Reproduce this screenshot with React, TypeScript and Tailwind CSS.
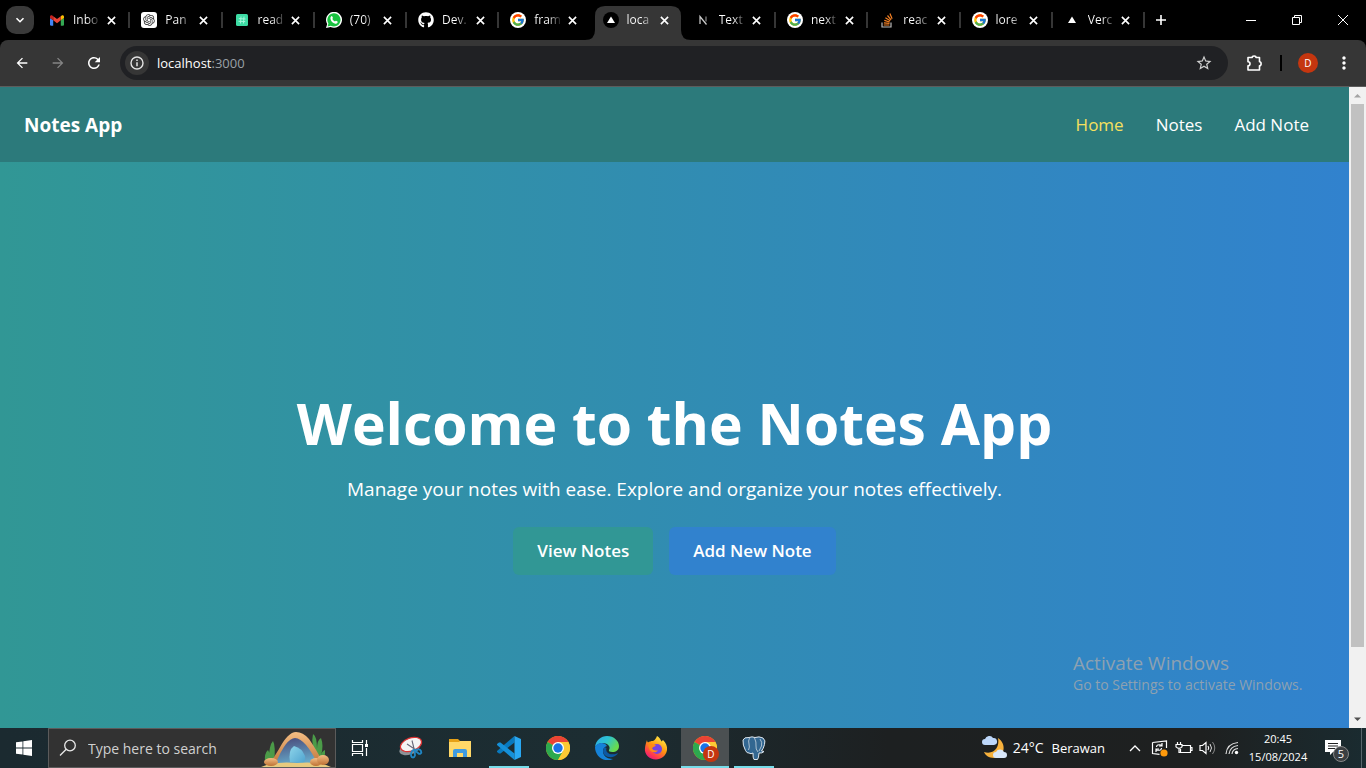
import React from "react";
import { FaGithub } from "react-icons/fa";
import { FcGoogle } from "react-icons/fc";
import { RiOpenaiFill } from "react-icons/ri";
import { MdArrowBack, MdArrowForward, MdRefresh, MdStarBorder, MdMoreVert } from "react-icons/md";

const Gmail = () => (
  <svg viewBox="0 0 24 18" className="h-[11px] w-3.5">
    <path fill="#4285f4" d="M0 2.5V16.4C0 17.3.7 18 1.6 18H5.5V8.7L0 4.5z" />
    <path fill="#34a853" d="M18.5 18h3.9c.9 0 1.6-.7 1.6-1.6V4.5l-5.5 4.2z" />
    <path fill="#fbbc04" d="M18.5 1.7v7L24 4.5V2.4C24 .4 21.700-.8 20.100.5z" />
    <path fill="#ea4335" d="M5.500 8.700v-7L12 6.600l6.500-4.900v7L12 13.600z" />
    <path fill="#c5221f" d="M0 2.400v2.100l5.500 4.200v-7L3.900.5C2.300-.8 0 .4 0 2.400z" />
  </svg>
);

const OpenAi = () => (
  <span className="flex size-4 items-center justify-center rounded-[3px] bg-white">
    <RiOpenaiFill className="size-3.5 text-[#333]" />
  </span>
);

const GreenHash = () => (
  <svg viewBox="0 0 16 16" className="size-4">
    <rect x="2" y="2" width="12" height="12" rx="1.500" fill="#3ddca4" />
    <path d="M7 4.500 6.500 11.500M10 4.500 9.500 11.500M4.800 6.600l6.700.4M4.500 9.300l6.700.3" stroke="#a5f7dc" strokeWidth="1" fill="none" />
  </svg>
);

const WhatsApp = () => (
  <svg viewBox="0 0 16 16" className="size-4">
    <path d="M0 16l1.200-4A8 8 0 1 1 4.500 15z" fill="#fff" />
    <path d="M1.600 14.500l.8-3A6.600 6.600 0 1 1 4.800 13.700z" fill="#18c23f" />
    <path d="M5.300 4.200q.7-.4 1 .2l.6 1.400q.1.400-.6 1.200 1 1.800 2.700 2.500.6-.9 1-.8l1.500.8q.4.300 0 1.200-.7 1.200-2.200 1Q5.200 10.700 4.400 6.500q-.1-1.500.9-2.300z" fill="#fff" />
  </svg>
);

const Google = () => (
  <span className="flex size-4 items-center justify-center rounded-full bg-white">
    <FcGoogle className="size-3.5" />
  </span>
);

const Vercel = () => (
  <svg viewBox="0 0 16 16" className="size-4">
    <circle cx="8" cy="8" r="8" fill="#000" />
    <path d="M8 4.500 12 11H4z" fill="#fff" />
  </svg>
);

const NextN = () => (
  <svg viewBox="0 0 16 16" className="size-4">
    <path d="M5 12V4.500L11.500 12.500" stroke="#cfcfcf" strokeWidth="1.200" fill="none" />
    <path d="M11 4.500v5" stroke="#8a8a8a" strokeWidth="1.200" />
  </svg>
);

const StackOverflow = () => (
  <svg viewBox="0 0 16 16" className="size-4">
    <path d="M3 10.500V15h9v-4.500" stroke="#bcbbbb" strokeWidth="1.200" fill="none" />
    <path d="M4.800 13h5.600M4.900 10.800l5.600.6M5.300 8.400l5.400 1.600M6.400 5.800l4.800 3M8.500 3.500l3.600 4.300M10.900 1.500l2.200 5.200" stroke="#f48024" strokeWidth="1.200" fill="none" />
  </svg>
);

const tabs = [
  { title: "Inbo", icon: <Gmail /> },
  { title: "Pan", icon: <OpenAi /> },
  { title: "read", icon: <GreenHash /> },
  { title: "(70)", icon: <WhatsApp /> },
  { title: "Dev.", icon: <FaGithub className="size-4 text-white" /> },
  { title: "fram", icon: <Google /> },
  { title: "loca", icon: <Vercel />, active: true },
  { title: "Text", icon: <NextN /> },
  { title: "next", icon: <Google /> },
  { title: "reac", icon: <StackOverflow /> },
  { title: "lore", icon: <Google /> },
  { title: "Verc", icon: <Vercel /> },
];

function TabStrip() {
  return (
    <div className="flex h-10 shrink-0 items-stretch bg-black text-white">
      <button aria-label="Search tabs" className="mt-1.5 ml-1.5 flex size-7 shrink-0 items-center justify-center rounded-[10px] bg-[#3a3a3a]">
        <svg viewBox="0 0 10 10" className="size-2.5">
          <path d="M1.500 3.200 5 6.700 8.500 3.200" stroke="#fff" strokeWidth="1.600" fill="none" />
        </svg>
      </button>
      <div className="ml-1 flex max-w-[1107px] min-w-0 flex-1">
        {tabs.map((tab, i) => (
          <div key={i} className="relative flex min-w-0 flex-1 pt-1.5">
            {tab.active && (
              <svg viewBox="0 0 106 34" preserveAspectRatio="none" className="absolute -left-[7px] bottom-0 h-[34px] w-[106px]">
                <path d="M0 34Q10 34 10 24V10Q10 0 20 0H86Q96 0 96 10V24Q96 34 106 34z" fill="#363636" />
              </svg>
            )}
            <div className="relative flex h-7 min-w-0 flex-1 items-center pl-[11px]">
              <span className="flex size-4 shrink-0 items-center justify-center">{tab.icon}</span>
              <span className="ml-2 w-7 shrink-0 bg-[linear-gradient(90deg,#fff_50%,#fff3_90%)] bg-clip-text text-xs leading-4 whitespace-nowrap text-transparent">
                {tab.title}
              </span>
              <button aria-label={"Close " + tab.title} className="ml-0.5 flex size-4 items-center justify-center">
                <svg viewBox="0 0 10 10" className="size-[9px]">
                  <path d="M1 1l8 8M9 1l-8 8" stroke="currentColor" strokeWidth="1.800" fill="none" />
                </svg>
              </button>
            </div>
            {!tab.active && i !== 5 && <span className="absolute top-3 right-0 h-4 w-0.5 bg-[#363636]" />}
          </div>
        ))}
      </div>
      <button aria-label="New tab" className="mt-1.5 ml-0.5 flex size-7 items-center justify-center">
        <svg viewBox="0 0 12 12" className="size-3">
          <path d="M6 1v10M1 6h10" stroke="#fff" strokeWidth="1.600" />
        </svg>
      </button>
      <div className="ml-auto flex">
        <button aria-label="Minimize" className="flex w-[46px] items-center justify-center">
          <span className="h-px w-2.5 bg-white" />
        </button>
        <button aria-label="Restore" className="flex w-[46px] items-center justify-center">
          <svg viewBox="0 0 10 10" className="size-2.5">
            <path d="M.5 2.500h7v7h-7zM2.500 2.500v-2h7v7h-2" fill="none" stroke="#fff" />
          </svg>
        </button>
        <button aria-label="Close window" className="flex w-[46px] items-center justify-center">
          <svg viewBox="0 0 10 10" className="size-2.5">
            <path d="M0 0l10 10M10 0 0 10" fill="none" stroke="#fff" />
          </svg>
        </button>
      </div>
    </div>
  );
}

function Toolbar() {
  return (
    <div className="shrink-0 bg-black">
      <div className="flex h-[47px] items-center rounded-t-lg border-b border-[#5c5c5c] bg-[#363636] text-white">
        <button aria-label="Back" className="ml-3.5"><MdArrowBack className="size-4" /></button>
        <button aria-label="Forward" className="ml-5"><MdArrowForward className="size-4 text-[#858585]" /></button>
        <button aria-label="Reload" className="ml-[19px]"><MdRefresh className="size-[18px]" /></button>
        <div className="mr-4 ml-[17px] flex h-[34px] flex-1 items-center rounded-full bg-[#202124] pr-[15px] pl-[5px]">
          <button aria-label="Site information" className="flex size-6 items-center justify-center rounded-full bg-[#363636]">
            <svg viewBox="0 0 16 16" className="size-4">
              <circle cx="8" cy="8" r="6" fill="none" stroke="#e3e3e3" strokeWidth="1.400" />
              <path d="M8 7.200v4M8 4.600v1.500" stroke="#e3e3e3" strokeWidth="1.500" />
            </svg>
          </button>
          <div className="ml-2 flex-1 text-[13px] leading-5">
            localhost<span className="text-[#9aa0a6]">:3000</span>
          </div>
          <button aria-label="Bookmark this page"><MdStarBorder className="size-[18px] text-[#d0d0d0]" /></button>
        </div>
        <button aria-label="Extensions">
          <svg viewBox="0 0 20 20" className="size-5">
            <path d="M4 4.500h4.200a1.900 1.500 0 0 1 3.800 0h3.500v4.300a1.600 2 0 0 1 0 4v4.200H4v-4.300a1.900 1.900 0 0 0 0-4z" fill="none" stroke="#fff" strokeWidth="1.600" strokeLinejoin="round" />
          </svg>
        </button>
        <span className="ml-4 h-4 w-0.5 bg-black" />
        <button aria-label="Profile" className="ml-4 flex size-5 items-center justify-center rounded-full bg-[#c5360f] text-[10px]">D</button>
        <button aria-label="Menu" className="mr-3 ml-4"><MdMoreVert className="size-5" /></button>
      </div>
    </div>
  );
}

function WebPage() {
  return (
    <div className="relative flex min-h-0 flex-1">
      <div className="flex min-w-0 flex-1 flex-col overflow-hidden bg-[#3182ce] text-white">
        <header className="flex h-[75px] shrink-0 items-center justify-between bg-[#2c7a7b] pr-10 pl-6">
          <div className="text-[19px] leading-6 font-bold">Notes App</div>
          <nav className="flex gap-8 text-[17px] leading-6">
            <a href="#home" className="text-[#f6e05e]">Home</a>
            <a href="#notes">Notes</a>
            <a href="#add">Add Note</a>
          </nav>
        </header>
        <main className="flex h-full shrink-0 flex-col items-center justify-center bg-[linear-gradient(90deg,#319795,#3182ce)] pb-[3px] text-center">
          <h1 className="text-[57px] leading-[72px] font-bold">Welcome to the Notes App</h1>
          <p className="mt-4 text-[19px] leading-7">Manage your notes with ease. Explore and organize your notes effectively.</p>
          <div className="mt-6 flex gap-4 text-[17px] leading-6 font-semibold">
            <button className="h-12 rounded-md bg-[#319795] px-6">View Notes</button>
            <button className="h-12 rounded-md bg-[#3182ce] px-6">Add New Note</button>
          </div>
        </main>
      </div>
      <div className="flex w-[17px] shrink-0 flex-col items-center bg-[#f1f1f1]">
        <svg viewBox="0 0 17 17" className="size-[17px]"><path d="M5 10.500h7L8.500 7z" fill="#a3a3a3" /></svg>
        <div className="w-[13px] flex-1 bg-[#c1c1c1]" />
        <div className="h-16" />
        <svg viewBox="0 0 17 17" className="size-[17px]"><path d="M5 6.500h7L8.500 10z" fill="#505050" /></svg>
      </div>
      <div className="absolute right-14 bottom-[33px] w-[237px] text-[#8da1b1]">
        <div className="text-[19px] leading-6">Activate Windows</div>
        <div className="text-sm leading-5">Go to Settings to activate Windows.</div>
      </div>
    </div>
  );
}

const Chrome = () => (
  <svg viewBox="0 0 24 24" className="size-6">
    <circle cx="12" cy="12" r="12" fill="#fbbc05" />
    <path d="M12 12 1.600 6A12 12 0 0 1 22.400 6z" fill="#ea4335" />
    <path d="M1.600 6A12 12 0 0 0 12 24L17.200 15 12 12z" fill="#2da94f" />
    <path d="M12 6h10.400A12 12 0 0 1 12 24l5.200-9z" fill="#fcc934" />
    <circle cx="12" cy="12" r="6" fill="#fff" />
    <circle cx="12" cy="12" r="4.700" fill="#1a73e8" />
  </svg>
);

const TaskView = () => (
  <svg viewBox="0 0 18 18" className="size-[18px]">
    <path d="M1.500 1v2.500h10V1M1.500 17v-2.500h10V17M1.500 5.500h10v7h-10zM15.500 1v4M15.500 9v8" fill="none" stroke="#fff" strokeWidth="1.200" />
    <path d="M14 5h3v3h-3z" fill="#fff" />
  </svg>
);

const Snip = () => (
  <svg viewBox="0 0 26 24" className="h-6 w-[26px]">
    <ellipse cx="11.500" cy="13" rx="10.500" ry="5.500" fill="#8d9297" transform="rotate(-18 11.500 13)" />
    <ellipse cx="13" cy="8.500" rx="11" ry="6.500" fill="#f4f4f4" stroke="#d33" strokeWidth="1.200" transform="rotate(-20 13 8.500)" />
    <path d="M9 8l9 6M14 4.500l2.500 10" stroke="#667" strokeWidth="1.100" />
    <path d="M16.500 14c-1-.5-3.500 1-3.500 4.500s3 4 4 1zM17 14.500c2-1.500 5-1.500 6 .5s-1 4-3 2z" fill="none" stroke="#2086c4" strokeWidth="1.800" />
  </svg>
);

const Explorer = () => (
  <svg viewBox="0 0 24 24" className="size-6">
    <path d="M1 3h9l2 2h10v4H1z" fill="#e6a117" />
    <path d="M1 6h10l1-1h11v16H1z" fill="#ffd868" />
    <path d="M5 21v-6q0-2 2-2h10q2 0 2 2v6h-4v-4H9v4z" fill="#3f9be0" />
  </svg>
);

const VsCode = () => (
  <svg viewBox="0 0 24 24" className="size-6">
    <path d="M17.500 6.500v11L10 12z" fill="#1c2d32" />
    <path d="M17.500 0v6.500L3.500 17.500 2 17.500 0 16V15z" fill="#0879be" />
    <path d="M17.500 24v-6.500L3.500 6.500H2L0 8v1z" fill="#1590d8" />
    <path d="M17.500 0 24 3v18l-6.500 3z" fill="#29a8f2" />
  </svg>
);

const Edge = () => (
  <svg viewBox="0 0 24 24" className="size-6">
    <defs>
      <linearGradient id="edgeTop" x1="0" y1="0" x2="1" y2=".5">
        <stop offset="0" stopColor="#2fa9e8" />
        <stop offset=".5" stopColor="#2cc3d2" />
        <stop offset="1" stopColor="#69dc4c" />
      </linearGradient>
    </defs>
    <path d="M0 11C1 4 6 0 12 0c7 0 12 5 12 10 0 4-3 6-6.500 6-3 0-4-1-3.500-2 2-3-1-7-6-7-4 0-7 2-8 4z" fill="url(#edgeTop)" />
    <path d="M0 11c2-5 10-5 12-1-4 1-5 5-3 9 2 3 6 4 9 4-8 4-18-2-18-12z" fill="#1582d8" />
    <path d="M9.500 11c-3 4-1 9 4 10 4 .6 7-.6 9-3 .5-.5 0-1-.600-.6-6 2.600-12-.4-10.400-5.400z" fill="#0c59a4" />
  </svg>
);

const Firefox = () => (
  <svg viewBox="0 0 24 24" className="size-6">
    <defs>
      <linearGradient id="foxFlame" x1=".8" y1="0" x2=".2" y2="1">
        <stop offset="0" stopColor="#fff44f" />
        <stop offset=".45" stopColor="#ff980e" />
        <stop offset=".8" stopColor="#ff3750" />
        <stop offset="1" stopColor="#e31587" />
      </linearGradient>
    </defs>
    <path d="M3 4c0 1 .5 2 1 2.500C5.500 5.500 7 5 9 5c2-1 3-2.500 4-5 2 1 4 4 4.500 5.500L19 4c3 3 4.500 6 4 10-1 6-6 9.500-11 9.500C5 23.500 0 18 1 12c.300-3 1-5 2-8z" fill="url(#foxFlame)" />
    <circle cx="13" cy="13" r="5" fill="#7543e3" />
    <path d="M4 9c3-3 5 0 8 .2-1 2-3 1.300-4 3 1 2 3 2.600 6 2-1 3-8 3-9-2z" fill="#ff8a16" />
  </svg>
);

const Tent = () => (
  <svg viewBox="0 0 72 38" className="h-[38px] w-[72px]">
    <defs>
      <linearGradient id="rock" x1="0" y1="0" x2="0" y2="1">
        <stop offset="0" stopColor="#f4bd83" />
        <stop offset="1" stopColor="#bd7135" />
      </linearGradient>
      <linearGradient id="cave" x1="0" y1="0" x2=".3" y2="1">
        <stop offset="0" stopColor="#484676" />
        <stop offset="1" stopColor="#66a8c9" />
      </linearGradient>
      <linearGradient id="glow" x1="0" y1="0" x2="1" y2="1">
        <stop offset="0" stopColor="#8ed5ea" />
        <stop offset="1" stopColor="#4fa3cf" />
      </linearGradient>
    </defs>
    <path d="M4 34q-1-10 3-13 3 5 1 9 0-14 4-18 3 5 1 22zM58 34q-9-18-6-29 4 2 4 15 0-9 4-11 3 8 0 17 1-4 4-5 1 9-6 13z" fill="#4b9b48" />
    <path d="M6 37Q13 29 18 20 27 3 35 3q7 0 13 7 7 10 16 27z" fill="url(#rock)" />
    <path d="M14 36Q25 9 34 9q11 1 23 27z" fill="url(#cave)" />
    <path d="M29 33Q27 21 33 17q8 2 11 10 1 5-2 7z" fill="url(#glow)" />
    <path d="M0 38q14-6 36-4 22-2 34 4z" fill="#e7ca7e" />
    <g fill="url(#rock)"><ellipse cx="10" cy="33" rx="7" ry="4" /><ellipse cx="55" cy="33" rx="6" ry="4" /><ellipse cx="62" cy="31" rx="6" ry="5" /></g>
  </svg>
);

const Elephant = () => (
  <svg viewBox="0 0 24 24" className="size-6">
    <path d="M1 4Q2 1 7 1.500q3-1.300 6 0 4-1.500 8 .5 3 2.500 1.500 6.500-1 4-3 6.500l2.500.5q-1.500 2-5 1.500-.2 5-1.500 6.500h-3.500q-1.200-1.500-1-6.500-2 1.500-4 0-2 .5-3.500-2.500Q.5 9 1 4z" fill="#336791" stroke="#dfe7ee" strokeWidth="1" />
    <path d="M7.500 2Q6 5 7 8q1 3-.5 6M12.500 2q2 4 1.500 8-.5 3 2 6M18 3q2.500 3 1.500 7l-2.500 5" fill="none" stroke="#c9d6e0" strokeWidth=".8" />
  </svg>
);

const Weather = () => (
  <svg viewBox="0 0 26 24" className="h-6 w-[26px]">
    <path d="M17 2c9 6 7 19-4 20-5 0-9-3-10-6 10 3 16-5 14-14z" fill="#f7b13c" />
    <path d="M4 9a3 3 0 0 1 0-6 4.500 4.500 0 0 1 8-1 3.500 3.500 0 0 1 1 7z" fill="#bdd7fa" />
    <path d="M15 22a3 3 0 0 1 0-6 4.500 4.500 0 0 1 8 0 3 3 0 0 1 0 6z" fill="#d9e8fb" />
  </svg>
);

function Tray() {
  return (
    <div className="ml-auto flex h-full items-center">
      <Weather />
      <span className="ml-1.5 text-[14px] leading-5">24°C</span>
      <span className="ml-2 text-[13px] leading-5">Berawan</span>
      <svg viewBox="0 0 12 8" className="ml-6 h-2 w-3"><path d="M1 7l5-5 5 5" fill="none" stroke="#fff" strokeWidth="1.300" /></svg>
      <svg viewBox="0 0 18 18" className="ml-2.5 size-[18px]">
        <path d="M1.500 3.500 15.500 2v7M1.500 3.500v11l7 .8" fill="none" stroke="#fff" strokeWidth="1.200" />
        <path d="M5.500 8q0-3 5-2M11 4v3H8M10.500 9q0 3-5 2M5 13v-3h3" fill="none" stroke="#fff" strokeWidth="1.200" />
        <circle cx="13" cy="14" r="3.600" fill="#ff9a0c" />
      </svg>
      <svg viewBox="0 0 18 14" className="ml-1.5 h-3.5 w-[18px]">
        <path d="M7 4.500h8.500v7h-10V8M15.500 6.500h1.500v3h-1.500M2.500 1v3M5.500 1v3M1 3.500h6v2.300q-3 3-6 0zM4 7v4.500h2" fill="none" stroke="#fff" strokeWidth="1.200" />
      </svg>
      <svg viewBox="0 0 18 14" className="ml-1.5 h-3.5 w-[18px]">
        <path d="M1 4.500h2.500L7 1.500v11L3.500 9.500H1zM9 5q1.500 2 0 4" fill="none" stroke="#fff" strokeWidth="1.200" />
        <path d="M11 3q3 4 0 8" fill="none" stroke="#ddd" />
        <path d="M13.500 1q4.500 6 0 12" fill="none" stroke="#888" />
      </svg>
      <svg viewBox="0 0 14 14" className="ml-2 size-3.5">
        <path d="M1 13Q2 2.500 13 1.500M4 13Q5 5.500 13 4.500M7 13q.5-5 6-5.500" fill="none" stroke="#ddd" strokeWidth="1.200" />
        <circle cx="11.500" cy="11.500" r="1.700" fill="#fff" />
      </svg>
      <div className="ml-2 w-[62px] text-center text-[11px] leading-[18px]">
        <div>20:45</div>
        <div>15/08/2024</div>
      </div>
      <button aria-label="Notifications" className="relative mr-2 ml-4 h-7 w-7">
        <svg viewBox="0 0 16 16" className="absolute top-1.5 left-0 size-4">
          <path d="M0 0h16v12H8l-3 3v-3H0z" fill="#fff" />
          <path d="M3 3.500h10M3 6h10M3 8.500h7" stroke="#222" />
        </svg>
        <span className="absolute top-3 left-2 flex size-4 items-center justify-center rounded-full border border-[#888] bg-[#3b3f42] text-[11px]">5</span>
      </button>
      <span className="mr-1 h-full w-px bg-[#58666c]" />
    </div>
  );
}

function Taskbar() {
  return (
    <footer className="flex h-10 shrink-0 items-center bg-[linear-gradient(90deg,#1b2a30_0%,#1c2d32_45%,#1d2021_65%,#1e2020_88%,#1a2b30_100%)] text-white">
      <button aria-label="Start" className="flex w-12 items-center justify-center">
        <svg viewBox="0 0 16 16" className="size-4">
          <path d="M0 2.300 6.500 1.400V7.600H0zM7.300 1.300 16 0v7.600H7.300zM0 8.400h6.500v6.200L0 13.700zM7.300 8.400H16V16l-8.700-1.300z" fill="#fff" />
        </svg>
      </button>
      <label className="flex h-full w-72 items-end border border-[#5b5b5b] bg-[#323232] pl-2.5">
        <svg viewBox="0 0 18 18" className="size-[18px] self-center">
          <circle cx="11" cy="6.500" r="5.300" fill="none" stroke="#e8e8e8" strokeWidth="1.300" />
          <path d="M7.200 10.300 1 16.500" stroke="#e8e8e8" strokeWidth="1.300" />
        </svg>
        <input aria-label="Search" placeholder="Type here to search" className="ml-[11px] h-full min-w-0 flex-1 bg-transparent text-[14px] outline-none placeholder:text-[#d0d0d0]" />
        <span className="mr-0.5"><Tent /></span>
      </label>
      <div className="flex h-full gap-px">
        <button aria-label="Task view" className="flex w-12 items-center justify-center"><TaskView /></button>
        <button aria-label="Snipping tool" className="ml-0.5 flex w-12 items-center justify-center"><Snip /></button>
        <button aria-label="File explorer" className="flex w-12 items-center justify-center"><Explorer /></button>
        <button aria-label="Code editor" className="flex w-12 items-center justify-center px-1">
          <span className="flex h-full w-10 items-center justify-center border-y-2 border-t-transparent border-b-[#76dce9]"><VsCode /></span>
        </button>
        <button aria-label="Chrome" className="flex w-12 items-center justify-center"><Chrome /></button>
        <button aria-label="Edge" className="flex w-12 items-center justify-center"><Edge /></button>
        <button aria-label="Firefox" className="flex w-12 items-center justify-center"><Firefox /></button>
        <button aria-label="Chrome, profile D" className="relative flex w-12 items-center justify-center border-y-2 border-t-[#4b5052] border-b-[#76dce9] bg-[#4b5052]">
          <Chrome />
          <span className="absolute right-2.5 bottom-1 flex size-4 items-center justify-center rounded-full bg-[#c5360f] text-[10px]">D</span>
        </button>
        <button aria-label="PostgreSQL" className="flex w-12 items-center justify-center px-1">
          <span className="flex h-full w-10 items-center justify-center border-y-2 border-t-transparent border-b-[#76dce9]"><Elephant /></span>
        </button>
      </div>
      <Tray />
    </footer>
  );
}

export default function App() {
  return (
    <div className="flex h-screen flex-col overflow-hidden font-['Open_Sans','Noto_Sans',sans-serif]">
      <TabStrip />
      <Toolbar />
      <WebPage />
      <Taskbar />
    </div>
  );
}
